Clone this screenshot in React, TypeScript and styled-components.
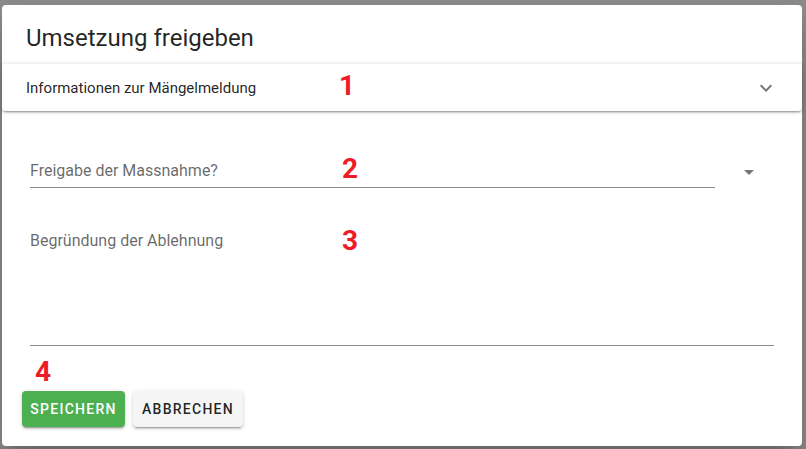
import React from "react";
import styled, { createGlobalStyle } from "styled-components";

const Global = createGlobalStyle`
  html, body { margin: 0; padding: 0; background: #8b8b8b; }
  body { font-family: Roboto, "Noto Sans", Arial, sans-serif; }
  * { box-sizing: border-box; }
`;

const Backdrop = styled.div`
  width: 806px;
  height: 449px;
  padding: 5px 4px 3px 2px;
  background: #8b8b8b;
`;

const Dialog = styled.div`
  position: relative;
  width: 800px;
  height: 441px;
  background: #fff;
  border-radius: 4px;
  display: flex;
  flex-direction: column;
  box-shadow: 0 11px 15px -7px rgba(0,0,0,.2), 0 24px 38px 3px rgba(0,0,0,.14);
`;

const Title = styled.div`
  height: 58px;
  padding: 17px 24px 0 24px;
  font-size: 24px;
  line-height: 32px;
  color: rgba(0,0,0,.87);
`;

const PanelHeader = styled.div`
  height: 48px;
  display: flex;
  align-items: center;
  justify-content: space-between;
  padding: 0 24px 0 24px;
  font-size: 15px;
  color: rgba(0,0,0,.87);
  background: #fff;
  border-radius: 0 0 4px 4px;
  box-shadow: 0 3px 1px -2px rgba(0,0,0,.2), 0 2px 2px 0 rgba(0,0,0,.14), 0 1px 5px 0 rgba(0,0,0,.12);
  border-top: 1px solid #f0f0f0;
`;

const Content = styled.div`
  display: flex;
  flex-direction: column;
  padding: 0 28px 0 28px;
`;

const SelectRow = styled.div`
  display: flex;
  align-items: center;
  margin-top: 39px;
`;

const SelectField = styled.div`
  width: 685px;
  height: 38px;
  display: flex;
  align-items: center;
  padding-top: 4px;
  border-bottom: 1px solid #8a8a8a;
  font-size: 16px;
  color: rgba(0,0,0,.6);
`;

const IconSlot = styled.div<{ $ml?: number; $mt?: number }>`
  width: 24px;
  height: 24px;
  display: flex;
  margin-left: ${(p) => p.$ml ?? 0}px;
  margin-top: ${(p) => p.$mt ?? 0}px;
`;

const TextArea = styled.div`
  margin-top: 37px;
  height: 121px;
  padding-top: 6px;
  border-bottom: 1px solid #8a8a8a;
  font-size: 16px;
  color: rgba(0,0,0,.6);
`;

const Actions = styled.div`
  display: flex;
  gap: 8px;
  padding: 45px 0 0 20px;
`;

const Button = styled.button<{ $primary?: boolean }>`
  height: 36px;
  padding: 0;
  border: none;
  border-radius: 4px;
  font-family: Roboto, Arial, sans-serif;
  font-size: 14px;
  font-weight: 500;
  letter-spacing: 1.25px;
  text-transform: uppercase;
  color: ${(p) => (p.$primary ? "#fff" : "rgba(0,0,0,.87)")};
  background: ${(p) => (p.$primary ? "#4caf50" : "#f5f5f5")};
  box-shadow: 0 3px 1px -2px rgba(0,0,0,.2), 0 2px 2px 0 rgba(0,0,0,.14), 0 1px 5px 0 rgba(0,0,0,.12);
  width: ${(p) => (p.$primary ? 103 : 110)}px;
`;

const Mark = styled.span<{ $x: number; $y: number }>`
  position: absolute;
  left: ${(p) => p.$x}px;
  top: ${(p) => p.$y}px;
  color: #ee1c25;
  font-family: Roboto, Arial, sans-serif;
  font-weight: 700;
  font-size: 28px;
  line-height: 1;
`;

const Chevron = () => (
  <svg width="24" height="24" viewBox="0 0 24 24">
    <path d="M7.41,8.58L12,13.17L16.59,8.58L18,10L12,16L6,10L7.41,8.58Z" fill="rgba(0,0,0,.54)" />
  </svg>
);

const MenuDown = () => (
  <svg width="24" height="24" viewBox="0 0 24 24">
    <path d="M7,10L12,15L17,10H7Z" fill="rgba(0,0,0,.54)" />
  </svg>
);

export default function App() {
  return (
    <>
      <Global />
      <Backdrop>
        <Dialog>
          <Title>Umsetzung freigeben</Title>
          <PanelHeader>
            <span>Informationen zur Mängelmeldung</span>
            <IconSlot>
              <Chevron />
            </IconSlot>
          </PanelHeader>
          <Content>
            <SelectRow>
              <SelectField>Freigabe der Massnahme?</SelectField>
              <IconSlot $ml={22} $mt={6}>
                <MenuDown />
              </IconSlot>
            </SelectRow>
            <TextArea>Begründung der Ablehnung</TextArea>
          </Content>
          <Actions>
            <Button $primary>Speichern</Button>
            <Button>Abbrechen</Button>
          </Actions>
          <Mark $x={337} $y={67}>1</Mark>
          <Mark $x={340} $y={150}>2</Mark>
          <Mark $x={340} $y={222}>3</Mark>
          <Mark $x={33} $y={353}>4</Mark>
        </Dialog>
      </Backdrop>
    </>
  );
}
